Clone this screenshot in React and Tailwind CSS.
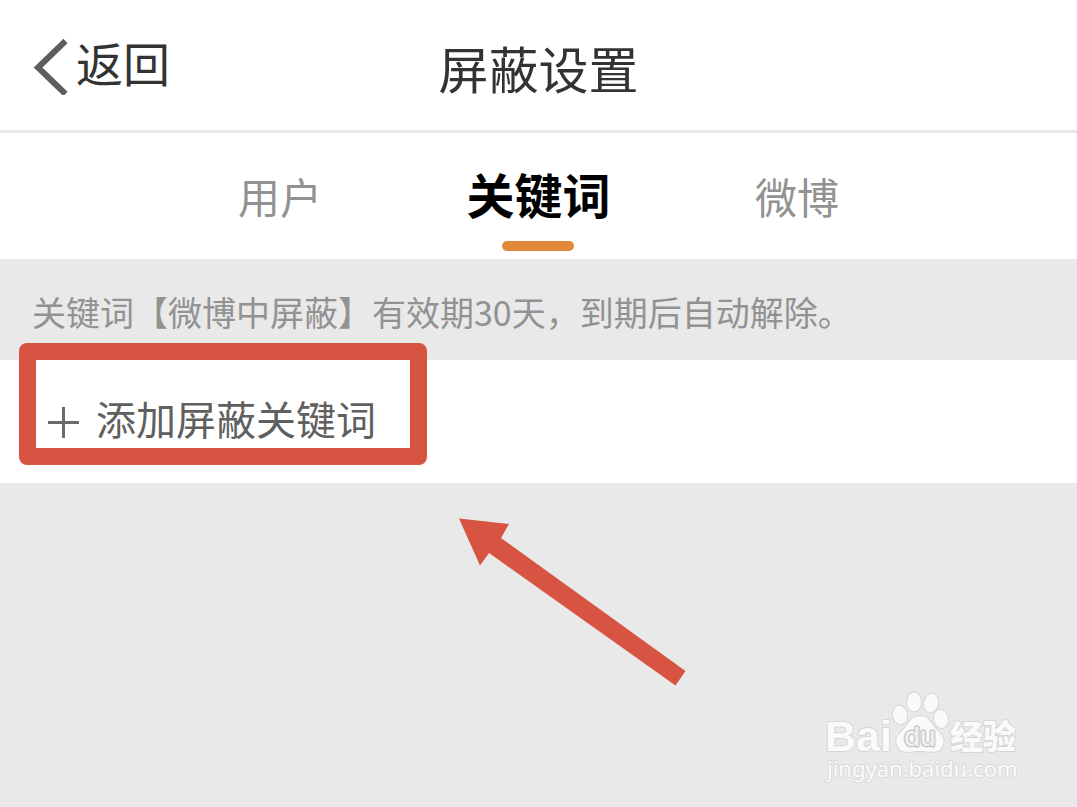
const tabs = [
  { id: 'user', label: '用户' },
  { id: 'keyword', label: '关键词' },
  { id: 'weibo', label: '微博' },
];

function Header() {
  return (
    <header className="relative flex h-[133px] items-center justify-center border-b-3 border-[#e7e7e7] bg-white pt-1">
      <button type="button" className="absolute inset-y-0 left-8 flex items-center gap-2 text-[47px] leading-none text-[#333333]">
        <svg width="36" height="60" viewBox="0 0 36 60" fill="none" stroke="#5e5e5e" strokeWidth="6">
          <path d="M33.500 6 L6 32.500 L33.500 59" />
        </svg>
        <span className="pb-2">返回</span>
      </button>
      <h1 className="text-[50px] leading-none text-[#333333]">屏蔽设置</h1>
    </header>
  );
}

function Tabs({ active }) {
  return (
    <nav className="bg-white">
      <div className="mx-auto grid h-[126px] w-[72%] grid-cols-3" role="tablist">
        {tabs.map((tab) =>
          tab.id === active ? (
            <button
              key={tab.id}
              type="button"
              role="tab"
              aria-selected="true"
              className="flex flex-col items-center justify-end gap-6 pb-2 text-[48px] leading-none font-bold text-black"
            >
              {tab.label}
              <span className="h-[10px] w-[72px] rounded-full bg-[#e38839]" />
            </button>
          ) : (
            <button
              key={tab.id}
              type="button"
              role="tab"
              aria-selected="false"
              className="flex items-center justify-center text-[42px] leading-none text-[#929292]"
            >
              {tab.label}
            </button>
          )
        )}
      </div>
    </nav>
  );
}

function Watermark() {
  return (
    <svg
      className="absolute right-[50px] bottom-[18px]"
      width="202"
      height="100"
      viewBox="0 0 202 100"
      fill="#fafafa"
      stroke="#d6d6d6"
      strokeWidth="2"
      strokeLinejoin="round"
      paintOrder="stroke"
      role="img"
      aria-label="Baidu 经验"
    >
      <text x="0" y="62" fontFamily="Liberation Sans, sans-serif" fontWeight="700" fontSize="43">Bai</text>
      {/* Paw */}
      <ellipse cx="75" cy="26" rx="7" ry="9.500" transform="rotate(-8 75 26)" />
      <ellipse cx="89" cy="13" rx="7" ry="9.500" />
      <ellipse cx="106" cy="14" rx="7" ry="9.500" transform="rotate(12 106 14)" />
      <ellipse cx="116" cy="30" rx="7" ry="9" transform="rotate(-15 116 30)" />
      <path d="M95 27 C86 27 83 36 77 42 C72 47 70 51 72 56 C75 66 84 62 95 62 C106 62 115 66 118 56 C120 50 117 46 112 41 C106 35 104 27 95 27 Z" />
      <text x="79" y="57" fontFamily="Inter, sans-serif" fontWeight="500" fontSize="26" fill="#f0f0f0" stroke="#c9c9c9" strokeWidth="3">du</text>
      <text x="125" y="60" fontFamily="Noto Sans CJK SC, sans-serif" fontWeight="900" fontSize="33">经验</text>
      <text x="2" y="88" fontFamily="Noto Sans, sans-serif" fontSize="22" stroke="#dadada">jingyan.baidu.com</text>
    </svg>
  );
}

function App() {
  return (
    <div className="relative flex min-h-screen flex-col bg-[#e9e9e9] font-['Noto_Sans_CJK_SC',sans-serif]">
      <Header />
      <Tabs active="keyword" />

      <p className="flex h-[101px] items-center px-8 pt-1 text-[34px] leading-none text-[#929292]">
        关键词【微博中屏蔽】有效期30天，到期后自动解除。
      </p>

      <main className="relative">
        <button type="button" className="flex h-[123px] w-full items-center gap-4 bg-white px-12 text-[40px] leading-none text-[#5f5f5f]">
          <svg width="32" height="32" viewBox="0 0 32 32" fill="none" stroke="#6a6a6a" strokeWidth="3">
            <path d="M0 16.500 H31 M15.500 1 V32" />
          </svg>
          <span className="pb-2">添加屏蔽关键词</span>
        </button>

        {/* Highlight frame and pointer */}
        <div className="pointer-events-none absolute -top-[17px] left-[19px] h-[122px] w-[408px] rounded-lg border-[17px] border-[#d75443]" />
        <svg
          className="pointer-events-none absolute top-[158px] left-[458px]"
          width="228"
          height="168"
          viewBox="0 0 228 168"
          fill="#d75443"
        >
          <path d="M1 0.500 L51 6 L43 20 L227.500 153 L217.500 167.500 L31 35 L22 47.500 Z" />
        </svg>
      </main>

      <Watermark />
    </div>
  );
}

export default App;
